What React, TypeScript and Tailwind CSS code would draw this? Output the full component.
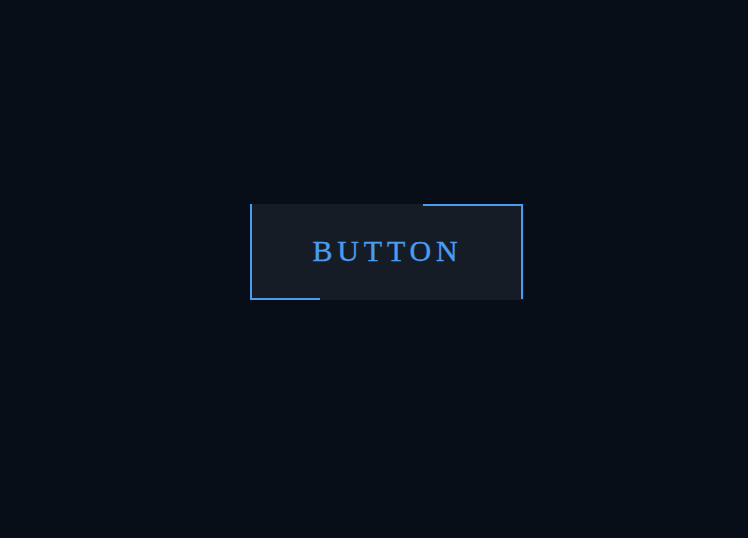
import React from 'react';

export default function App() {
  return (
    <div className="min-h-screen w-full bg-[#070e18] pt-[204px] pl-[250px]">
      <button className="relative flex items-center justify-center w-[274px] h-[96px] bg-[#151c26] text-[#4a9cf0] text-[30px] leading-none tracking-[4.8px] pl-[1px] pb-[2px] font-['Liberation_Serif',serif] [-webkit-text-stroke:0.35px_#4a9cf0]">
        BUTTON
        <span className="absolute left-0 top-0 w-[2px] h-[95px] bg-[#4a9cf0]" />
        <span className="absolute left-0 top-[94px] w-[70px] h-[2px] bg-[#4a9cf0]" />
        <span className="absolute right-[1px] top-0 w-[100px] h-[2px] bg-[#4a9cf0]" />
        <span className="absolute right-[1px] top-0 w-[2px] h-[95px] bg-[#4a9cf0]" />
      </button>
    </div>
  );
}
